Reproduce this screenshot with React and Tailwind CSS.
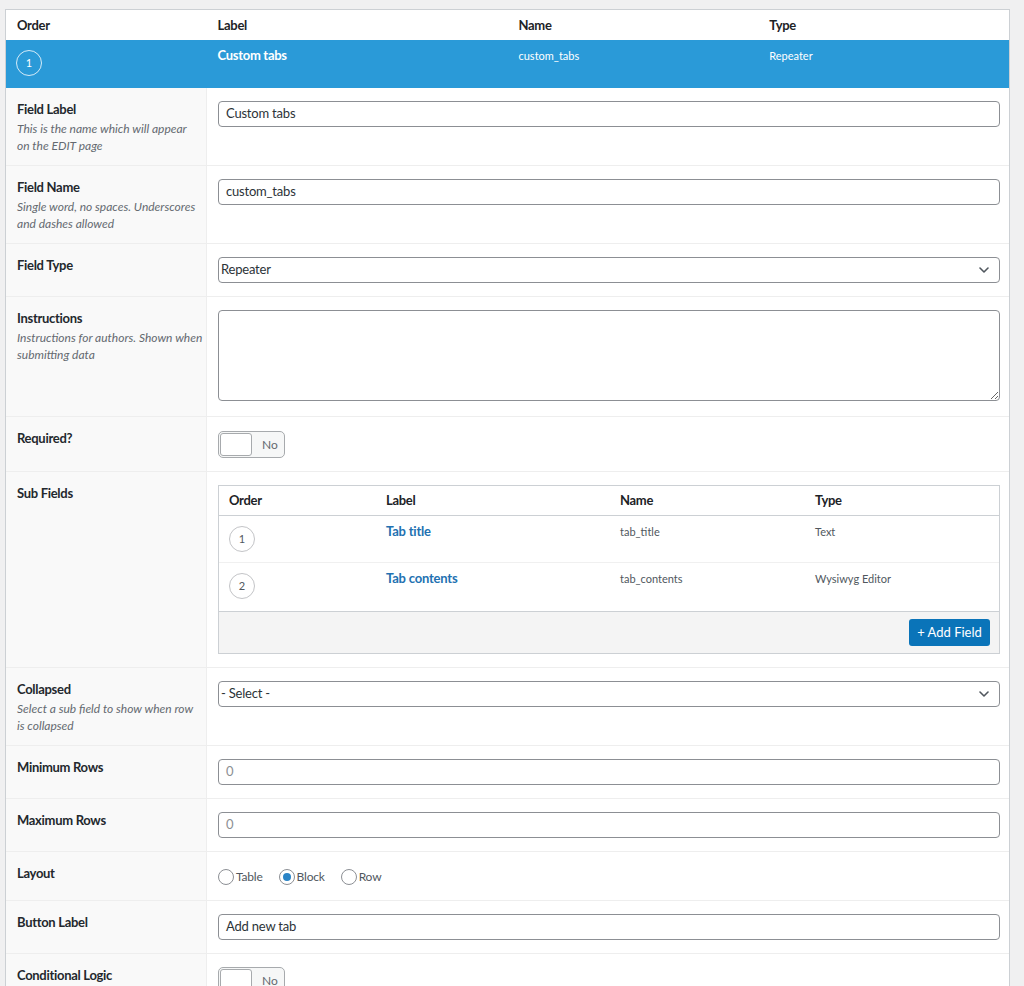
import React from "react";

const FONT = "font-['Lato','Noto_Sans',sans-serif]";

function Chevron() {
  return (
    <svg width="10" height="6" viewBox="0 0 10 6" className="absolute right-[10px] top-1/2 -translate-y-1/2">
      <path d="M1 1l4 4 4-4" fill="none" stroke="#50575e" strokeWidth="1.6" strokeLinecap="round" strokeLinejoin="round" />
    </svg>
  );
}

function TextInput({ value }) {
  return (
    <div className="h-[26px] rounded-[4px] border border-[#8c8f94] bg-white pl-[7px] flex items-center text-[13px] tracking-[-0.2px] text-[#2c3338]">
      {value}
    </div>
  );
}

function Select({ value }) {
  return (
    <div className="relative h-[26px] rounded-[4px] border border-[#8c8f94] bg-white pl-[2px] flex items-center text-[13px] tracking-[-0.2px] text-[#2c3338]">
      {value}
      <Chevron />
    </div>
  );
}

function Toggle() {
  return (
    <div className="h-[27px] w-[67px] rounded-[5px] border border-[#a7aaad] bg-[#f6f7f7] flex items-center pl-[1px]">
      <div className="h-[23px] w-[32px] rounded-[3px] border border-[#a7aaad] bg-white" />
      <span className="ml-[10px] text-[12px] text-[#646970]">No</span>
    </div>
  );
}

function Row({ label, desc, children, contentClass = "pt-[13px] pb-[13px]", last }) {
  return (
    <div className={"flex " + (last ? "" : "border-b border-[#eeeeee]")}>
      <div className="w-[201px] shrink-0 bg-[#f9f9f9] border-r border-[#eeeeee] pl-[11px] pr-[4px] pt-[13px] pb-[11px]">
        <div className="text-[13px] leading-4 font-bold tracking-[-0.3px] text-[#23282d]">{label}</div>
        {desc && (
          <div className="mt-[3px] text-[12px] leading-[17px] italic text-[#646970] whitespace-nowrap">
            {desc}
          </div>
        )}
      </div>
      <div className={"flex-1 pl-[11px] pr-[9px] " + contentClass}>{children}</div>
    </div>
  );
}

function Circle({ n, white }) {
  return (
    <div
      className={
        "h-[26px] w-[26px] rounded-full flex items-center justify-center text-[11px] " +
        (white ? "border border-white/80 text-white" : "border border-[#c3c4c7] bg-white text-[#50575e]")
      }
    >
      {n}
    </div>
  );
}

function Radio({ label, checked }) {
  return (
    <div className="flex items-center mr-[16px]">
      <div className="h-[16px] w-[16px] rounded-full border border-[#8c8f94] bg-white flex items-center justify-center">
        {checked && <div className="h-[8px] w-[8px] rounded-full bg-[#2a84c6]" />}
      </div>
      <span className="ml-[2px] text-[12px] tracking-[-0.2px] text-[#50575e]">{label}</span>
    </div>
  );
}

const HEAD = "text-[13px] font-bold tracking-[-0.3px] text-[#1d2327]";

export default function App() {
  return (
    <div className={"min-h-[986px] bg-[#f0f0f1] pl-[5px] pr-[14px] pt-[9px] " + FONT}>
      <div className="border border-b-0 border-[#ccd0d4] bg-white">
        {/* header */}
        <div className={"grid grid-cols-[20%_30%_25%_25%] h-[30px] pt-[2px] items-center " + HEAD}>
          <div className="pl-[11px]">Order</div>
          <div className="pl-[11px]">Label</div>
          <div className="pl-[11px]">Name</div>
          <div className="pl-[11px]">Type</div>
        </div>
        {/* blue row */}
        <div className="grid grid-cols-[20%_30%_25%_25%] h-[48px] bg-[#2a9ad8] text-white">
          <div className="pl-[10px] pt-[10px]">
            <Circle n="1" white />
          </div>
          <div className="pl-[11px] pt-[6px] leading-[18px] text-[13px] font-bold tracking-[-0.3px]">Custom tabs</div>
          <div className="pl-[11px] pt-[7px] leading-[18px] text-[11px]">custom_tabs</div>
          <div className="pl-[11px] pt-[7px] leading-[18px] text-[11px]">Repeater</div>
        </div>

        <Row label="Field Label" desc={<>This is the name which will appear<br />on the EDIT page</>}>
          <TextInput value="Custom tabs" />
        </Row>
        <Row label="Field Name" desc={<>Single word, no spaces. Underscores<br />and dashes allowed</>}>
          <TextInput value="custom_tabs" />
        </Row>
        <Row label="Field Type">
          <Select value="Repeater" />
        </Row>
        <Row label="Instructions" desc={<>Instructions for authors. Shown when<br />submitting data</>} contentClass="pt-[13px] pb-[15px]">
          <textarea readOnly className="block w-full h-[91px] rounded-[4px] border border-[#8c8f94] bg-white outline-none" />
        </Row>
        <Row label="Required?" contentClass="pt-[14px] pb-[13px]">
          <Toggle />
        </Row>
        <Row label="Sub Fields">
          <div className="border border-[#ccd0d4] bg-white">
            <div className={"grid grid-cols-[20%_30%_25%_25%] h-[30px] pt-[1px] items-center border-b border-[#ccd0d4] " + HEAD}>
              <div className="pl-[10px]">Order</div>
              <div className="pl-[11px]">Label</div>
              <div className="pl-[11px]">Name</div>
              <div className="pl-[11px]">Type</div>
            </div>
            {[
              ["1", "Tab title", "tab_title", "Text"],
              ["2", "Tab contents", "tab_contents", "Wysiwyg Editor"],
            ].map(([n, l, nm, t], i) => (
              <div
                key={n}
                className={"grid grid-cols-[20%_30%_25%_25%] " + (i === 0 ? "h-[47px] border-b border-[#f0f0f0]" : "h-[48px]")}
              >
                <div className="pl-[10px] pt-[10px]">
                  <Circle n={n} />
                </div>
                <div className="pl-[11px] pt-[6px] leading-[18px] text-[13px] font-bold tracking-[-0.2px] text-[#2271b1]">{l}</div>
                <div className="pl-[11px] pt-[7px] leading-[18px] text-[11px] text-[#50575e]">{nm}</div>
                <div className="pl-[11px] pt-[7px] leading-[18px] text-[11px] text-[#50575e]">{t}</div>
              </div>
            ))}
            <div className="border-t border-[#ccd0d4] bg-[#f4f4f4] pt-[7px] pb-[7px] pr-[9px] flex justify-end">
              <div className="h-[27px] w-[81px] rounded-[3px] bg-[#0a74b9] text-white text-[13px] flex items-center justify-center">
                + Add Field
              </div>
            </div>
          </div>
        </Row>
        <Row label="Collapsed" desc={<>Select a sub field to show when row<br />is collapsed</>}>
          <Select value="- Select -" />
        </Row>
        <Row label="Minimum Rows">
          <TextInput value={<span className="text-[#8c8f94]">0</span>} />
        </Row>
        <Row label="Maximum Rows">
          <TextInput value={<span className="text-[#8c8f94]">0</span>} />
        </Row>
        <Row label="Layout" contentClass="pt-[17px] pb-[15px]">
          <div className="flex items-center h-[16px]">
            <Radio label="Table" />
            <Radio label="Block" checked />
            <Radio label="Row" />
          </div>
        </Row>
        <Row label="Button Label">
          <TextInput value="Add new tab" />
        </Row>
        <Row label="Conditional Logic" last>
          <Toggle />
        </Row>
      </div>
    </div>
  );
}
